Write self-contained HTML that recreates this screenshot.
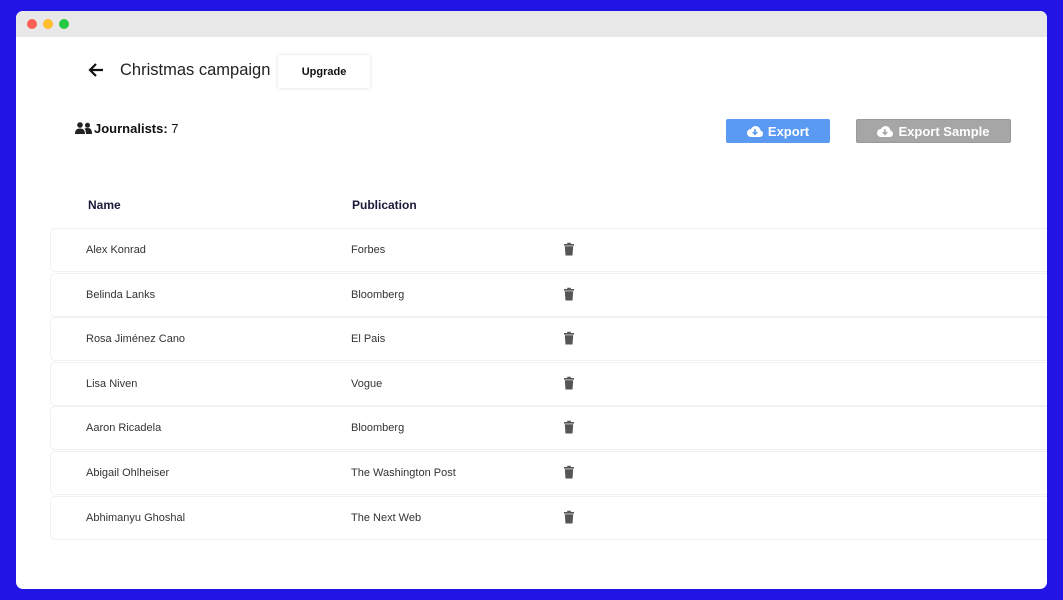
<!DOCTYPE html>
<html><head><style>
*{margin:0;padding:0;box-sizing:border-box}
body{width:1063px;height:600px;background:#2314e6;font-family:"Liberation Sans",sans-serif;position:relative;overflow:hidden;color:#222}
.win{position:absolute;left:16px;top:11px;width:1031px;height:578px;background:#fff;border-radius:7px;overflow:hidden}
.bar{height:26px;background:#e8e8e8;position:relative}
.dot{position:absolute;top:8px;width:10px;height:10px;border-radius:50%}
.a{position:absolute}
.row{position:absolute;left:34px;width:1020px;height:44px;border:1px solid #f1f1f1;border-radius:5px;font-size:11px;color:#333}
.row span{position:absolute;top:15px}
.btn{position:absolute;top:108px;height:24px;color:#fff;font-size:13px;font-weight:bold;display:flex;align-items:center;justify-content:center;gap:5px;border-radius:2px}
</style></head><body>
<div class="win">
<div class="bar"><div class="dot" style="left:11px;background:#fe5f57"></div><div class="dot" style="left:27px;background:#febc2e"></div><div class="dot" style="left:43px;background:#28c840"></div></div>
<svg class="a" style="left:72px;top:51px" width="16" height="16" viewBox="0 0 16 16"><path d="M15 8H2M8 2L2 8l6 6" stroke="#111" stroke-width="2.2" fill="none"/></svg>
<div class="a" style="left:104px;top:50px;font-size:16.5px;color:#222">Christmas campaign</div>
<div class="a" style="left:262px;top:44px;width:92px;height:33px;box-shadow:0 0 4px rgba(0,0,0,.12);font-size:11px;font-weight:bold;display:flex;align-items:center;justify-content:center;color:#111">Upgrade</div>
<svg class="a" style="left:59px;top:111px" width="17" height="12" viewBox="0 0 17 12"><circle cx="5" cy="3" r="2.8" fill="#222"/><circle cx="12.5" cy="3.3" r="2.5" fill="#222"/><path d="M0 12c0-4 2-5.5 5-5.5s5 1.5 5 5.5zM9.5 6.8c1-.6 2-.8 3-.8 3 0 4.5 1.5 4.5 6h-6c0-2-.5-4-1.5-5.2z" fill="#222"/></svg>
<div class="a" style="left:78px;top:110px;font-size:13px;color:#111"><b>Journalists:</b> 7</div>
<div class="btn" style="left:710px;width:104px;background:#5b9af2">
<svg width="16" height="12" viewBox="0 0 16 12"><path d="M4 12a4 4 0 010-8 5 5 0 019.5 1.5A3.3 3.3 0 0112.5 12z" fill="#fff"/><path d="M8 4v5M5.8 7L8 9.3 10.2 7" stroke="#5b9af2" stroke-width="1.6" fill="none"/></svg>Export</div>
<div class="btn" style="left:840px;width:155px;background:#a6a6a6;border:1px solid #999">
<svg width="16" height="12" viewBox="0 0 16 12"><path d="M4 12a4 4 0 010-8 5 5 0 019.5 1.5A3.3 3.3 0 0112.5 12z" fill="#fff"/><path d="M8 4v5M5.8 7L8 9.3 10.2 7" stroke="#a6a6a6" stroke-width="1.6" fill="none"/></svg>Export Sample</div>
<div class="a" style="left:72px;top:187px;font-size:12px;font-weight:bold;color:#1a1a3a">Name</div>
<div class="a" style="left:336px;top:187px;font-size:12px;font-weight:bold;color:#1a1a3a">Publication</div>
</div>
<script>
var d=[["Alex Konrad","Forbes"],["Belinda Lanks","Bloomberg"],["Rosa Jiménez Cano","El Pais"],["Lisa Niven","Vogue"],["Aaron Ricadela","Bloomberg"],["Abigail Ohlheiser","The Washington Post"],["Abhimanyu Ghoshal","The Next Web"]];
var h="";d.forEach(function(r,i){h+='<div class="row" style="top:'+(217+i*44.6)+'px"><span style="left:35px">'+r[0]+'</span><span style="left:300px">'+r[1]+'</span><svg style="position:absolute;left:512px;top:13px" width="12" height="14" viewBox="0 0 12 14"><path d="M1 2h10v1.6H1zM4.2 0.8h3.6v1.4H4.2zM1.8 4.2h8.4l-.7 9.3H2.5z" fill="#555"/></svg></div>'});
document.querySelector('.win').insertAdjacentHTML('beforeend',h);
</script>
</body></html>
